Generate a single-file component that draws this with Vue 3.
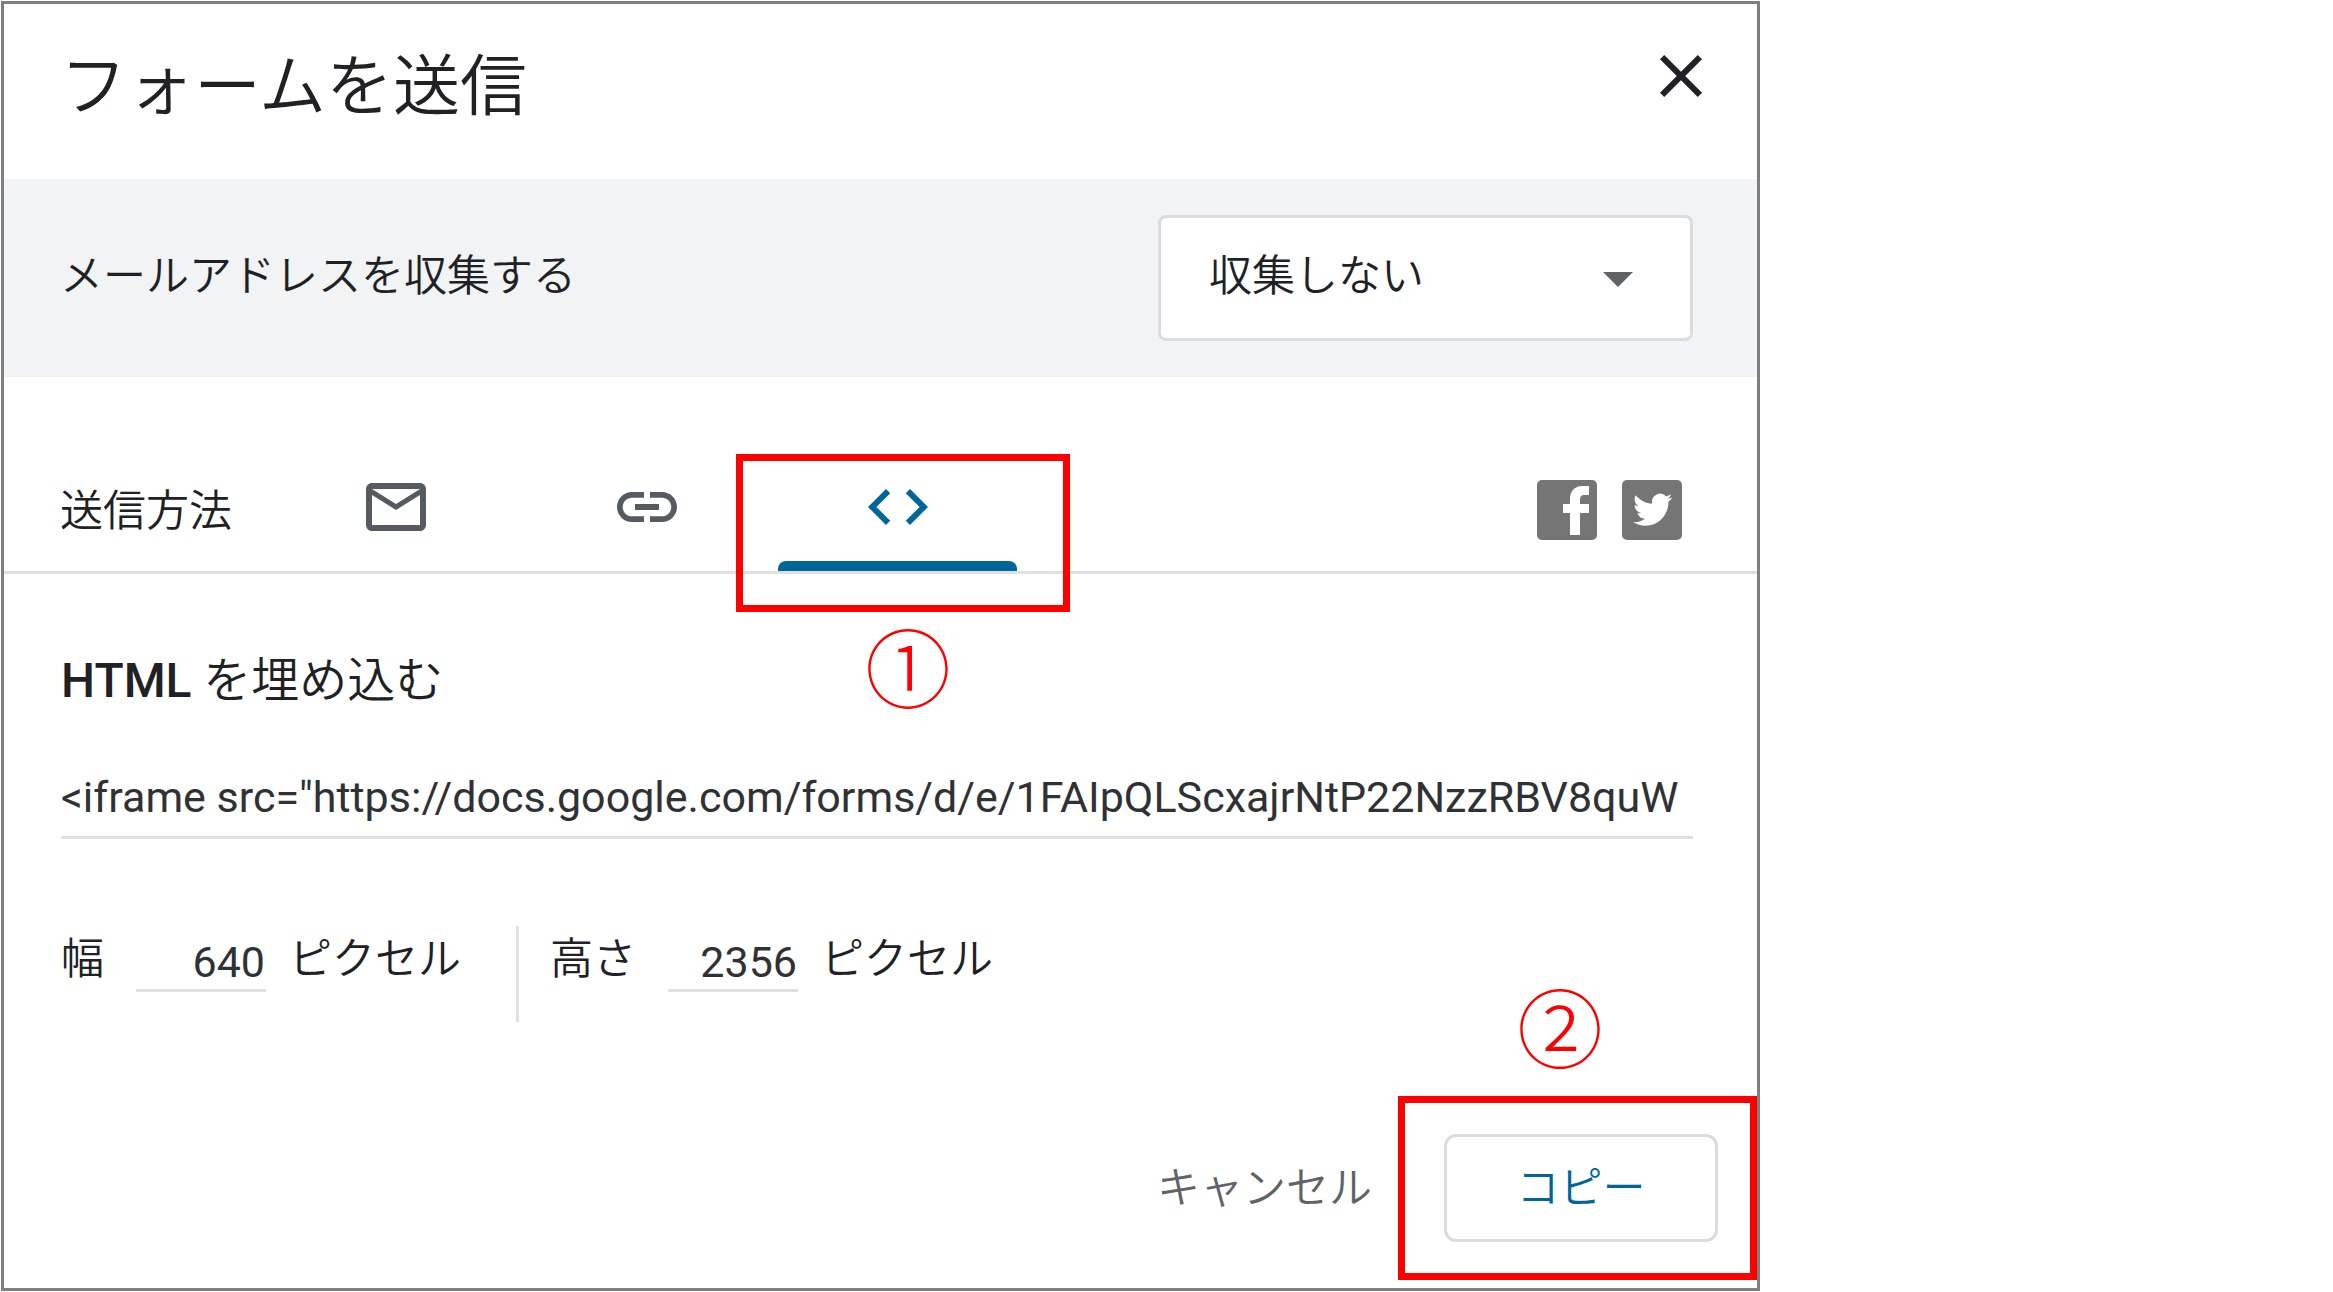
<template>
  <div class="dialog" role="dialog" aria-labelledby="dialog-title">
    <header class="dialog-header">
      <h1 id="dialog-title">フォームを送信</h1>
      <button type="button" class="close" aria-label="閉じる">
        <svg class="icon" viewBox="0 0 24 24">
          <path d="M19 6.41L17.59 5 12 10.59 6.41 5 5 6.41 10.59 12 5 17.59 6.41 19 12 13.41 17.59 19 19 17.59 13.41 12z" />
        </svg>
      </button>
    </header>

    <div class="collect">
      <label for="collect">メールアドレスを収集する</label>
      <div class="select-box">
        <select id="collect" v-model="collect">
          <option value="none">収集しない</option>
        </select>
        <svg class="icon arrow" viewBox="0 0 24 24">
          <path d="M7 10l5 5 5-5z" />
        </svg>
      </div>
    </div>

    <div class="methods">
      <span class="methods-label">送信方法</span>
      <div class="tabs" role="tablist">
        <button
          v-for="tab in tabs"
          :key="tab.id"
          type="button"
          role="tab"
          class="tab"
          :class="{ active: tab.id === activeTab }"
          :aria-label="tab.label"
          :aria-selected="tab.id === activeTab"
          @click="activeTab = tab.id"
        >
          <svg class="icon" viewBox="0 0 24 24">
            <path :d="tab.icon" />
          </svg>
        </button>
        <div class="callout callout-tab">
          <span class="callout-number">①</span>
        </div>
      </div>
      <div class="social">
        <button type="button" aria-label="Facebook">
          <svg viewBox="0 0 60 60">
            <rect width="60" height="60" rx="5" fill="#757575" />
            <path fill="#fff" d="M33 55V33H26V24H33V19C33 11 38 6 45 6H52V15H47C44 15 43 17 43 19V24H52V33H43V55Z" />
          </svg>
        </button>
        <button type="button" aria-label="Twitter">
          <svg viewBox="0 0 60 60">
            <rect width="60" height="60" rx="5" fill="#757575" />
            <path
              fill="#fff"
              transform="translate(11 10) scale(1.64)"
              d="M23.953 4.57a10 10 0 01-2.825.775 4.958 4.958 0 002.163-2.723c-.951.555-2.005.959-3.127 1.184a4.92 4.92 0 00-8.384 4.482C7.69 8.095 4.067 6.13 1.64 3.162a4.822 4.822 0 00-.666 2.475c0 1.71.87 3.213 2.188 4.096a4.904 4.904 0 01-2.228-.616v.06a4.923 4.923 0 003.946 4.827 4.996 4.996 0 01-2.212.085 4.936 4.936 0 004.604 3.417 9.867 9.867 0 01-6.102 2.105c-.39 0-.779-.023-1.17-.067a13.995 13.995 0 007.557 2.209c9.053 0 13.998-7.496 13.998-13.985 0-.21 0-.42-.015-.63A9.935 9.935 0 0024 4.59z"
            />
          </svg>
        </button>
      </div>
    </div>

    <div class="embed">
      <h2><label for="embed-code"><span class="latin">HTML</span> を埋め込む</label></h2>
      <input id="embed-code" class="code" type="text" readonly :value="embedCode" />

      <div class="sizes">
        <div class="size">
          <label for="width">幅</label>
          <input id="width" v-model="width" type="text" />
          <span>ピクセル</span>
        </div>
        <div class="size">
          <label for="height">高さ</label>
          <input id="height" v-model="height" type="text" />
          <span>ピクセル</span>
        </div>
      </div>
    </div>

    <footer class="actions">
      <button type="button" class="cancel">キャンセル</button>
      <div class="copy-box">
        <button type="button" class="copy">コピー</button>
        <div class="callout callout-copy">
          <span class="callout-number">②</span>
        </div>
      </div>
    </footer>
  </div>
</template>

<script setup>
import { ref } from 'vue';

const tabs = [
  {
    id: 'mail',
    label: 'メール',
    icon: 'M22 6c0-1.1-.9-2-2-2H4c-1.1 0-2 .9-2 2v12c0 1.1.9 2 2 2h16c1.1 0 2-.9 2-2V6zm-2 0l-8 5-8-5h16zm0 12H4V8l8 5 8-5v10z',
  },
  {
    id: 'link',
    label: 'リンク',
    icon: 'M3.9 12c0-1.71 1.39-3.1 3.1-3.1h4V7H7c-2.76 0-5 2.24-5 5s2.24 5 5 5h4v-1.9H7c-1.71 0-3.1-1.39-3.1-3.1zM8 13h8v-2H8v2zm9-6h-4v1.9h4c1.71 0 3.1 1.39 3.1 3.1s-1.39 3.1-3.1 3.1h-4V17h4c2.76 0 5-2.24 5-5s-2.24-5-5-5z',
  },
  {
    id: 'embed',
    label: 'HTML を埋め込む',
    icon: 'M9.4 16.6L4.8 12l4.6-4.6L8 6l-6 6 6 6 1.4-1.4zm5.2 0l4.6-4.6-4.6-4.6L16 6l6 6-6 6-1.4-1.4z',
  },
];

const activeTab = ref('embed');
const collect = ref('none');
const embedCode = ref('<iframe src="https://docs.google.com/forms/d/e/1FAIpQLScxajrNtP22NzzRBV8quW');
const width = ref('640');
const height = ref('2356');
</script>

<style>
body {
  background: #fff;
}
</style>

<style scoped>
.dialog,
.dialog * {
  box-sizing: border-box;
}

.dialog {
  max-width: 1759px;
  margin: 1px;
  border: 3px solid #7f7f7f;
  background: #fff;
  color: #202124;
  font-family: Roboto, 'Noto Sans CJK JP', sans-serif;
  font-size: 43px;
  font-weight: 350;
  line-height: 66px;
}

button,
input,
select {
  margin: 0;
  padding: 0;
  border: none;
  border-radius: 0;
  outline: none;
  background: none;
  color: inherit;
  font: inherit;
}

button {
  cursor: pointer;
}

.icon {
  display: block;
  width: 72px;
  height: 72px;
  fill: currentColor;
}

.dialog-header {
  display: flex;
  justify-content: space-between;
  align-items: flex-start;
  padding: 36px 40px 45px 56px;
}

h1 {
  margin: 0;
  font-size: 67px;
  font-weight: 350;
  line-height: 94px;
}

.collect {
  display: flex;
  justify-content: space-between;
  align-items: center;
  padding: 36px 64px 36px 56px;
  background: #f1f3f4;
}

.collect label {
  padding-bottom: 4px;
}

.select-box {
  position: relative;
  flex: 0 1 535px;
}

.select-box select {
  display: block;
  width: 100%;
  height: 126px;
  padding: 0 48px 4px;
  appearance: none;
  border: 3px solid #dadce0;
  border-radius: 8px;
  background: #fff;
}

.arrow {
  position: absolute;
  top: 27px;
  right: 39px;
  color: #5f6368;
  pointer-events: none;
}

.methods {
  display: flex;
  align-items: stretch;
  padding: 0 75px 0 56px;
  border-bottom: 3px solid #e0e0e0;
}

.methods-label {
  flex: 0 0 210px;
  padding-top: 101px;
}

.tabs {
  position: relative;
  display: flex;
  flex: 0 1 753px;
}

.tab {
  position: relative;
  display: flex;
  flex: 1;
  justify-content: center;
  padding: 94px 0 28px;
  color: #565b61;
}

.tab.active {
  color: #006699;
}

.tab.active::after {
  content: '';
  position: absolute;
  right: 6px;
  bottom: 0;
  left: 6px;
  height: 10px;
  border-radius: 8px 8px 0 0;
  background: #006699;
}

.social {
  display: flex;
  gap: 25px;
  margin-left: auto;
  padding-top: 103px;
}

.social button {
  width: 60px;
  height: 60px;
}

.social svg {
  display: block;
}

.embed {
  padding: 74px 64px 0 57px;
}

h2 {
  margin: 0;
  font-size: 48px;
  font-weight: 350;
}

.latin {
  font-weight: 500;
}

.code {
  display: block;
  width: 100%;
  height: 74px;
  margin-top: 51px;
  padding-bottom: 7px;
  border-bottom: 3px solid #e0e0e0;
  color: #303134;
  font-weight: 400;
}

.sizes {
  display: flex;
  margin-top: 87px;
}

.size {
  display: flex;
  align-items: flex-start;
  height: 96px;
}

.size + .size {
  margin-left: 55px;
  padding-left: 31px;
  border-left: 3px solid #e0e0e0;
}

.size input {
  width: 130px;
  height: 66px;
  margin: 0 23px 0 32px;
  padding: 8px 1px 0 0;
  border-bottom: 3px solid #e0e0e0;
  color: #303134;
  font-weight: 400;
  text-align: right;
}

.actions {
  display: flex;
  justify-content: flex-end;
  align-items: center;
  gap: 72px;
  padding: 112px 39px 46px;
}

.cancel {
  color: #5f6368;
}

.copy-box {
  position: relative;
  flex: 0 1 274px;
}

.copy {
  display: block;
  width: 100%;
  height: 108px;
  border: 3px solid #dadce0;
  border-radius: 12px;
  color: #006699;
}

/* numbered red frames laid over the controls */
.callout {
  position: absolute;
  border: 7px solid #f00;
  pointer-events: none;
}

.callout-number {
  position: absolute;
  color: #f00;
  font-family: 'Noto Sans CJK JP', sans-serif;
  font-size: 86px;
  font-weight: 300;
  line-height: 86px;
}

.callout-tab {
  top: 77px;
  right: -47px;
  bottom: -41px;
  width: 334px;
}

.callout-tab .callout-number {
  top: 161px;
  left: 122px;
}

.callout-copy {
  top: -38px;
  right: -39px;
  bottom: -38px;
  left: -46px;
}

.callout-copy .callout-number {
  bottom: 205px;
  left: 112px;
}
</style>
